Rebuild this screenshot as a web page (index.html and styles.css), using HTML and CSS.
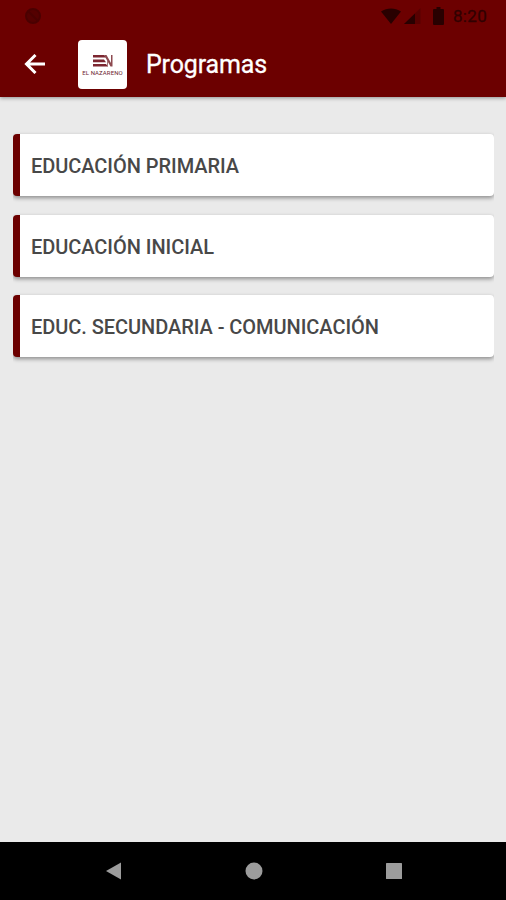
FILE: index.html
```
<!DOCTYPE html>
<html lang="es">
<head>
    <meta charset="UTF-8">
    <meta name="viewport" content="width=device-width, initial-scale=1.0">
    <title>Programas</title>
    <link rel="stylesheet" href="styles.css">
</head>
<body>
    <header class="header">
        <div class="status-bar">
            <svg class="status-dot" width="18" height="18" viewBox="0 0 18 18">
                <circle cx="9" cy="9" r="7" fill="#540000" stroke="#4a0000" stroke-width="2"/>
                <path d="M4 4l10 10" stroke="#4a0000" stroke-width="2"/>
            </svg>
            <svg class="wifi" width="20" height="16" viewBox="0 0 20 16">
                <path d="M0 3.500C6-0.500 14-0.500 20 3.500L10 16z"/>
            </svg>
            <svg class="signal" width="17" height="16" viewBox="0 0 17 16">
                <path d="M0 16L16.500 0V16z" fill="#580000"/>
                <path d="M0 16L11 5.500V16z"/>
            </svg>
            <svg class="battery" width="11" height="18" viewBox="0 0 11 18">
                <path d="M3.500 0h4v2h2.500q1 0 1 1v14q0 1-1 1H1q-1 0-1-1V3q0-1 1-1h2.500z"/>
            </svg>
            <span class="time">8:20</span>
        </div>
        <div class="toolbar">
            <svg class="back" width="22" height="20" viewBox="0 0 22 20">
                <path d="M11.500 1L2.500 10l9 9M2.500 10H21" fill="none" stroke="#fff" stroke-width="3"/>
            </svg>
            <div class="logo">
                <svg width="20" height="12" viewBox="0 0 20 12">
                    <path d="M0 0h11l2 2.600H0zM0 4.500h11l2 2.700H0zM0 9h13l2 2.500H0z" fill="#7c2630"/>
                    <path d="M11 0h2.500l4.500 8V0h1.500v11.500h-2z" fill="#8d4a50"/>
                    <path d="M14.500 6v5.500" stroke="#a67579"/>
                </svg>
                <span class="logo-name">EL NAZARENO</span>
            </div>
            <h1 class="title">Programas</h1>
        </div>
    </header>

    <main class="programs">
        <div class="card">EDUCACIÓN PRIMARIA</div>
        <div class="card">EDUCACIÓN INICIAL</div>
        <div class="card">EDUC. SECUNDARIA - COMUNICACIÓN</div>
    </main>

    <nav class="nav-bar">
        <svg width="18" height="18" viewBox="0 0 18 18">
            <path d="M1 9L16 0.500v17z"/>
        </svg>
        <svg width="18" height="18" viewBox="0 0 18 18">
            <circle cx="9" cy="9" r="8.500"/>
        </svg>
        <svg width="18" height="18" viewBox="0 0 18 18">
            <rect x="1" y="1" width="16" height="16" rx="0.500"/>
        </svg>
    </nav>
</body>
</html>
```
FILE: styles.css
```
* {
    box-sizing: border-box;
}

body {
    margin: 0;
    height: 900px;
    display: flex;
    flex-direction: column;
    background-color: #eaeaea;
    font-family: Roboto, "Liberation Sans", sans-serif;
}

svg {
    display: block;
    flex: none;
}

.header {
    height: 97px;
    background-color: #6c0000;
    box-shadow: 0 1px 4px rgba(0, 0, 0, 0.4);
}

.status-bar {
    display: flex;
    align-items: center;
    height: 32px;
    padding: 0 19px 0 24px;
    fill: #280000;
}

.wifi {
    margin-left: auto;
}

.signal {
    margin-left: 3px;
}

.battery {
    margin-left: 12px;
}

.time {
    margin-left: 9px;
    font-size: 17px;
    line-height: 20px;
    letter-spacing: 0.3px;
    color: #300000;
    -webkit-text-stroke: 0.3px #300000;
}

.toolbar {
    display: flex;
    align-items: center;
    height: 64px;
    padding-left: 24px;
}

.logo {
    display: flex;
    flex-direction: column;
    align-items: center;
    width: 49px;
    height: 49px;
    margin-left: 32px;
    padding-top: 15px;
    background-color: #fff;
    border-radius: 4px;
}

.logo-name {
    margin-top: 2px;
    font-size: 6px;
    line-height: 7px;
    letter-spacing: 0.1px;
    white-space: nowrap;
    color: #6c2630;
}

.title {
    margin: 2px 0 0 19px;
    font-size: 25px;
    font-weight: 400;
    line-height: 30px;
    letter-spacing: -0.15px;
    color: #fff;
    -webkit-text-stroke: 0.3px #fff;
}

.programs {
    flex: 1;
    padding: 37px 12px 0 13px;
}

.card {
    height: 62px;
    margin-bottom: 18.5px;
    padding-left: 11px;
    border-left: 7px solid #6c0000;
    border-radius: 4px;
    background-color: #fff;
    box-shadow: 0 2px 4px rgba(0, 0, 0, 0.4);
    /* keep the shadow above and below only */
    clip-path: inset(-8px 0);
    font-size: 20px;
    font-weight: 500;
    line-height: 64px;
    letter-spacing: -0.05px;
    color: #484848;
}

.nav-bar {
    display: flex;
    align-items: center;
    justify-content: space-between;
    height: 58px;
    padding: 0 103.5px 0 104.5px;
    background-color: #000;
    fill: #9c9c9c;
}
```
